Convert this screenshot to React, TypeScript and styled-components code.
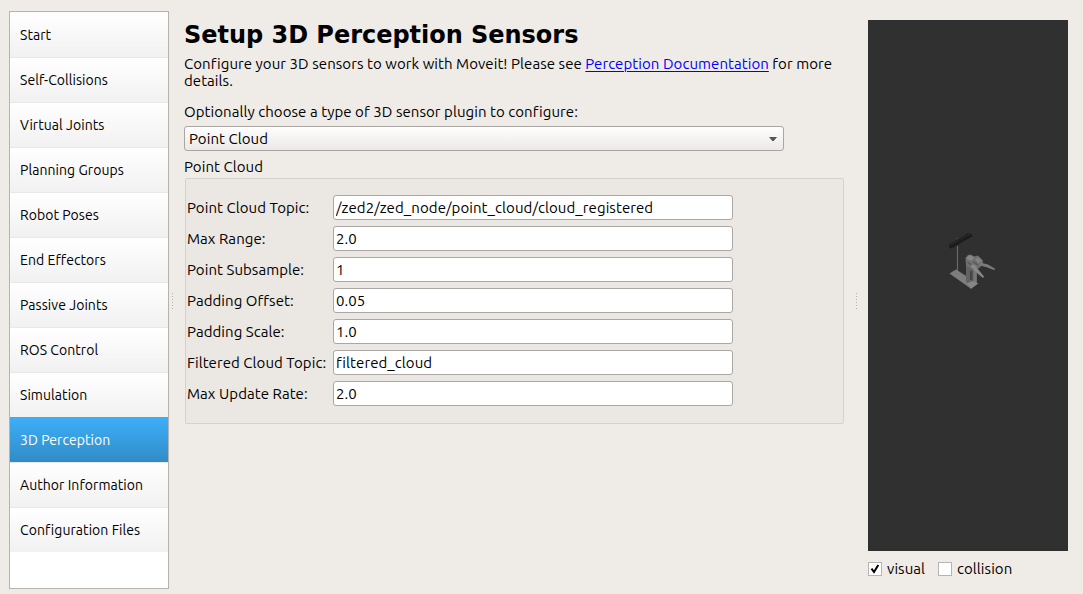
import React from 'react';
import styled, { createGlobalStyle } from 'styled-components';

const GlobalStyle = createGlobalStyle`
  * { box-sizing: border-box; }
  body {
    margin: 0;
    background: #efebe7;
    color: #000;
    font-family: Ubuntu, "Noto Sans", "Open Sans", sans-serif;
    font-size: 15px;
    line-height: 17px;
    letter-spacing: 0.06px;
    font-variant-ligatures: none;
  }
`;

const Window = styled.div`
  display: flex;
  width: 1083px;
  height: 594px;
  padding: 11px 15px 5px 9px;
  overflow: hidden;
  background: #efebe7;
`;

const Sidebar = styled.nav`
  width: 160px;
  height: 578px;
  flex: none;
  border: 1px solid #b6b3b0;
  background: #fff;
  font-size: 14px;
`;

const NavItem = styled.div<{ $active?: boolean }>`
  display: flex;
  align-items: center;
  height: 45px;
  padding: 0 0 0 10px;
  border-top: 1px solid ${(p) => (p.$active ? '#3daef8' : '#e9e8e7')};
  background: ${(p) => (p.$active ? 'linear-gradient(#3daef8, #308cc6)' : 'linear-gradient(#fff, #f1f1f1)')};
  color: ${(p) => (p.$active ? '#fff' : '#000')};
  white-space: nowrap;
  &:first-child { border-top-color: #fafafa; }
`;

const Splitter = styled.div<{ $width: number }>`
  display: flex;
  flex: none;
  flex-direction: column;
  align-items: center;
  gap: 2px;
  width: ${(p) => p.$width}px;
  padding-top: 282px;
`;

const Grip = styled.i`
  width: 1px;
  height: 1px;
  background: #b5b2ae;
`;

const Main = styled.main`
  display: flex;
  flex-direction: column;
  align-items: flex-start;
  width: 660px;
  margin-left: 8px;
  flex: none;
`;

const Title = styled.h1`
  margin: 10px 0 0;
  font: bold 24px/28px "DejaVu Sans", sans-serif;
  letter-spacing: -0.03px;
  white-space: nowrap;
`;

const Text = styled.div<{ $top?: number }>`
  margin-top: ${(p) => p.$top ?? 0}px;
  white-space: nowrap;
`;

const DocLink = styled.a`
  color: #0000ff;
  text-decoration: underline;
  text-underline-offset: 2px;
  text-decoration-thickness: 1px;
`;

const Combo = styled.div`
  display: flex;
  align-items: center;
  justify-content: space-between;
  width: 600px;
  height: 25px;
  margin-top: 6px;
  padding: 0 6px 0 4px;
  border: 1px solid #a9a6a3;
  border-radius: 3px;
  background: linear-gradient(#fefefe, #ebe9e7);
`;

const Group = styled.section`
  display: flex;
  flex-direction: column;
  gap: 6px;
  width: 659px;
  height: 246px;
  margin: 3px 0 0 1px;
  padding: 16px 0 0 1px;
  border: 1px solid #d5d1cd;
  border-radius: 2px;
  background: #ebe7e3;
`;

const Field = styled.label`
  display: flex;
  align-items: center;
  height: 25px;
`;

const FieldLabel = styled.span`
  width: 146px;
  white-space: nowrap;
`;

const Input = styled.input`
  width: 400px;
  height: 25px;
  padding: 0 2px;
  border: 1px solid #aaa7a4;
  border-radius: 3px;
  outline: 0;
  background: #fff;
  color: #000;
  font: inherit;
  font-variant-ligatures: none;
  letter-spacing: 0.08px;
`;

const Preview = styled.aside`
  width: 200px;
  flex: none;
  padding-top: 9px;
`;

const Viewport = styled.div`
  height: 531px;
  padding: 210px 0 0 77px;
  background: #303030;
  svg { display: block; }
`;

const Checks = styled.div`
  display: flex;
  align-items: center;
  gap: 13px;
  margin-top: 9px;
`;

const Check = styled.label`
  display: flex;
  align-items: center;
  gap: 5px;
`;

const Box = styled.span`
  display: flex;
  width: 14px;
  height: 14px;
  border: 1px solid #b7b4b1;
  background: #fff;
`;

const navItems = [
  'Start',
  'Self-Collisions',
  'Virtual Joints',
  'Planning Groups',
  'Robot Poses',
  'End Effectors',
  'Passive Joints',
  'ROS Control',
  'Simulation',
  '3D Perception',
  'Author Information',
  'Configuration Files',
];

const fields = [
  { label: 'Point Cloud Topic:', value: '/zed2/zed_node/point_cloud/cloud_registered' },
  { label: 'Max Range:', value: '2.0' },
  { label: 'Point Subsample:', value: '1' },
  { label: 'Padding Offset:', value: '0.05' },
  { label: 'Padding Scale:', value: '1.0' },
  { label: 'Filtered Cloud Topic:', value: 'filtered_cloud' },
  { label: 'Max Update Rate:', value: '2.0' },
];

const Grips = ({ width }: { width: number }) => (
  <Splitter $width={width}>
    {[0, 1, 2, 3, 4, 5].map((n) => <Grip key={n} />)}
  </Splitter>
);

const Robot = () => (
  <svg width="56" height="64" viewBox="945 230 56 64">
    {/* camera bar on its pole */}
    <path d="M957.5 246V273" stroke="#686868" strokeWidth="1.2" />
    <path d="M948.5 244.5L968 233L971.5 233.5L972.5 236L952 248.5L949.5 248Z" fill="#232323" />
    <path d="M949.5 247.5L972 235.5" stroke="#1a1a1a" strokeWidth="1.6" />
    <path d="M956 238h2v1h-2z" fill="#4d4d4d" />
    {/* base plate */}
    <path d="M949.5 273.5L956 269.5L978 283.5L971 288.8Z" fill="#7d7d7d" />
    {/* torso and legs */}
    <path d="M966 265L977 268V284L971 286L966 282Z" fill="#626262" />
    <path d="M970 271h2.5v9h-2.5z" fill="#454545" />
    <path d="M973.5 270h3v13h-3z" fill="#777" />
    <path d="M967 283L973 281L978 283.5L971 288.8Z" fill="#868686" />
    {/* shoulders */}
    <path d="M965.5 258L968 255L971 254.5L974 256.5L978 255.5L983 260.5L982.5 265L979 268L974 270L966 266Z" fill="#6f6f6f" />
    <path d="M966 258L970 255L974.5 257.5L971 261Z" fill="#868686" />
    <path d="M975 259L978.5 257.5L982 261L978 263Z" fill="#828282" />
    <path d="M973 261.5L978 265M967.5 262.5L972 265" stroke="#505050" />
    {/* arms */}
    <path d="M980 262.5L988 264.5L995.5 269L994 270L986 267L980 265.5Z" fill="#7b7b7b" />
    <path d="M972 264L975 265.5L984 276.5L983 278L978 274L971 267Z" fill="#888" />
  </svg>
);

export default function App() {
  return (
    <>
      <GlobalStyle />
      <Window>
        <Sidebar>
          {navItems.map((item) => (
            <NavItem key={item} $active={item === '3D Perception'}>
              <span>{item}</span>
            </NavItem>
          ))}
        </Sidebar>
        <Grips width={7} />
        <Main>
          <Title>Setup 3D Perception Sensors</Title>
          <Text $top={6}>
            <span>Configure your 3D sensors to work with Moveit! Please see </span>
            <DocLink>Perception Documentation</DocLink>
            <span> for more</span>
          </Text>
          <Text>details.</Text>
          <Text $top={14}>Optionally choose a type of 3D sensor plugin to configure:</Text>
          <Combo>
            <span>Point Cloud</span>
            <svg width="8" height="4" viewBox="0 0 8 4"><path d="M0 0H8L4.7 4H3.3Z" fill="#555" /></svg>
          </Combo>
          <Text $top={7}>Point Cloud</Text>
          <Group>
            {fields.map((f) => (
              <Field key={f.label}>
                <FieldLabel>{f.label}</FieldLabel>
                <Input defaultValue={f.value} />
              </Field>
            ))}
          </Group>
        </Main>
        <Grips width={24} />
        <Preview>
          <Viewport><Robot /></Viewport>
          <Checks>
            <Check>
              <Box>
                <svg width="12" height="12" viewBox="0 0 12 12"><path d="M2.5 5.6L5 9L9.3 2" fill="none" stroke="#000" strokeWidth="2" /></svg>
              </Box>
              <span>visual</span>
            </Check>
            <Check><Box /><span>collision</span></Check>
          </Checks>
        </Preview>
      </Window>
    </>
  );
}
